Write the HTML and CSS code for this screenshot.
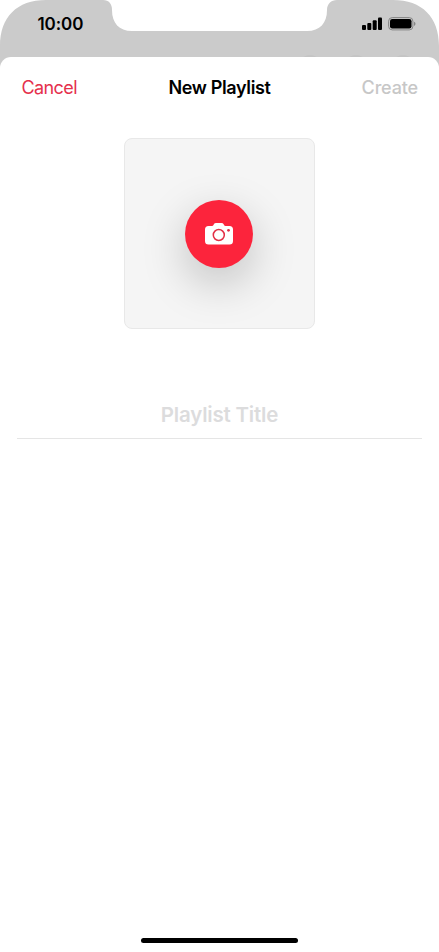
FILE: index.html
```
<!DOCTYPE html>
<html lang="en">
<head>
<meta charset="utf-8">
<title>New Playlist</title>
<link rel="stylesheet" href="styles.css">
</head>
<body>
<main class="phone">
  <header class="status">
    <svg class="backdrop" viewBox="0 0 439 70" aria-hidden="true">
      <path fill="#cbcbcb" d="M0 70V46C0 17 17 0 46 0H103C109 0 112 4 112 10C112 23 119 31 132 31H307C320 31 327 23 327 10C327 4 331 0 337 0H393C422 0 439 17 439 46V70Z"/>
      <g fill="#c4c4c4"><circle cx="310" cy="67" r="12"/><circle cx="356" cy="67" r="12"/><circle cx="403" cy="67" r="12"/></g>
    </svg>
    <span class="time">10:00</span>
    <svg class="indicators" width="54" height="14" viewBox="0 0 54 14" aria-hidden="true">
      <rect x="0" y="8" width="4" height="5" rx="1"/>
      <rect x="5.3" y="6" width="4" height="7" rx="1"/>
      <rect x="10.7" y="3.3" width="4" height="9.7" rx="1"/>
      <rect x="16" y=".5" width="4" height="12.5" rx="1"/>
      <rect x="26.6" y=".6" width="24.3" height="12.3" rx="3.6" fill="none" stroke="#858585"/>
      <rect x="28" y="2" width="21.5" height="9.5" rx="2.2"/>
      <path fill="#858585" d="M52 4.7Q53.5 5.2 53.5 6.8T52 8.9Z"/>
    </svg>
  </header>
  <section class="sheet">
    <nav class="bar">
      <span class="cancel">Cancel</span>
      <h1 class="title">New Playlist</h1>
      <span class="create">Create</span>
    </nav>
    <div class="artwork">
      <div class="camera">
        <svg width="30" height="24" viewBox="0 0 30 24" aria-hidden="true">
          <path fill="#fff" d="M4.5 4H8Q9 4 9.5 3L10 2Q10.5 1 12 1H17.5Q19 1 19.5 2L20 3Q20.500 4 21.500 4H25.500Q29 4 29 7.500V19Q29 22.500 25.500 22.500H4.500Q1 22.500 1 19V7.500Q1 4 4.500 4Z"/>
          <circle cx="14.8" cy="13" r="5.500" fill="none" stroke="#e32e45" stroke-width="1.500"/>
          <circle cx="24.500" cy="8.300" r="1.400" fill="#e32e45"/>
        </svg>
      </div>
    </div>
    <div class="name-field"><span>Playlist Title</span></div>
  </section>
  <div class="home"></div>
</main>
</body>
</html>
```

FILE: styles.css
```
* { box-sizing: border-box; }
body { margin: 0; background: #fff; font-family: Inter, "Liberation Sans", sans-serif; }
.phone { height: 952px; display: flex; flex-direction: column; overflow: hidden; }
.status { position: relative; height: 57px; display: flex; justify-content: space-between; align-items: flex-start; padding: 14px 23px 0 37.5px; flex: none; }
.backdrop { position: absolute; top: 0; left: 0; width: 439px; height: 70px; }
.time { position: relative; font-size: 17px; line-height: 21px; font-weight: 600; letter-spacing: -.1px; }
.indicators { position: relative; margin-top: 3px; }
.sheet { position: relative; flex: 1; background: #fff; border-radius: 11px 11px 0 0; display: flex; flex-direction: column; align-items: center; }
.bar { width: 100%; height: 60px; padding: 2px 21px 0; display: grid; grid-template-columns: 1fr auto 1fr; align-items: center; font-size: 18px; line-height: 22px; }
.cancel { color: #e5304c; letter-spacing: -.6px; padding-left: .5px; }
.title { margin: 0; font-size: 18px; font-weight: 600; letter-spacing: -.35px; }
.create { color: #c7c7c7; font-weight: 500; text-align: right; letter-spacing: -.15px; }
.artwork { width: 191px; height: 191px; margin-top: 21px; border: 1px solid #e8e8e8; border-radius: 8px; background: #f5f5f5; display: grid; place-items: center; }
.camera { width: 68px; height: 68px; margin-right: 1px; border-radius: 50%; background: #fc243c; display: grid; place-items: center; box-shadow: 0 15px 45px rgba(0,0,0,.22); }
.name-field { width: 405px; margin-top: 59px; height: 51px; padding-top: 14px; border-bottom: 1px solid #e5e5e5; text-align: center; font-size: 20.5px; line-height: 26px; font-weight: 600; letter-spacing: -.2px; color: #dcdcdd; }
.home { width: 157px; height: 5px; margin: 0 auto 9px; border-radius: 3px; background: #000; flex: none; }
```
